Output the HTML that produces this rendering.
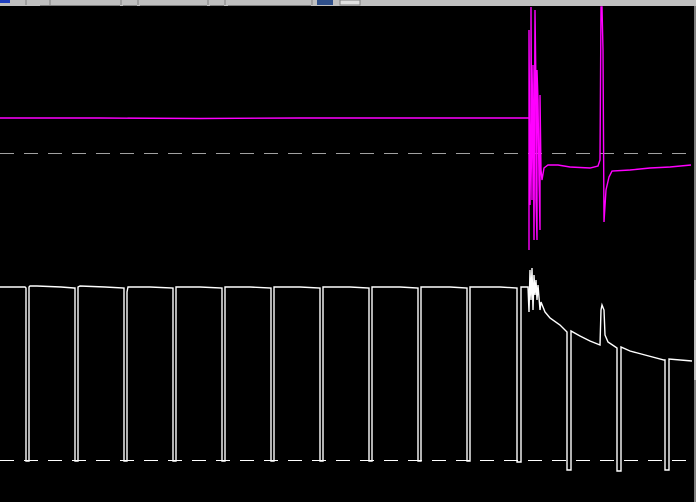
<!DOCTYPE html>
<html><head><meta charset="utf-8"><style>
html,body{margin:0;padding:0;background:#000;width:696px;height:502px;overflow:hidden}
svg{display:block}
</style></head><body>
<svg width="696" height="502" viewBox="0 0 696 502" xmlns="http://www.w3.org/2000/svg">
<rect width="696" height="502" fill="#000"/>
<rect x="0" y="0" width="696" height="6" fill="#c0c0c0"/>
<rect x="0" y="0" width="10" height="3" fill="#2040c0"/>
<g fill="none" stroke="#808080" stroke-width="1">
<line x1="26" y1="0" x2="26" y2="5"/><line x1="50" y1="0" x2="50" y2="5"/>
<line x1="40" y1="5.5" x2="120" y2="5.5"/><line x1="121" y1="0" x2="121" y2="5"/>
<line x1="123" y1="5.5" x2="137" y2="5.5"/><line x1="138" y1="0" x2="138" y2="5"/>
<line x1="140" y1="5.5" x2="207" y2="5.5"/><line x1="208" y1="0" x2="208" y2="5"/>
<line x1="210" y1="5.5" x2="224" y2="5.5"/><line x1="225" y1="0" x2="225" y2="5"/>
<line x1="228" y1="5.5" x2="311" y2="5.5"/><line x1="312" y1="0" x2="312" y2="5"/>
</g>
<rect x="317" y="0" width="16" height="5" fill="#30508a"/>
<rect x="340" y="0" width="20" height="5" fill="#e0e0e0" stroke="#808080"/>
<rect x="694" y="6" width="2" height="496" fill="#808080"/>
<rect x="694" y="280" width="2" height="100" fill="#c0c0c0"/>
<line x1="0" y1="153.5" x2="692" y2="153.5" stroke="#a0a0a0" stroke-width="1" stroke-dasharray="14 10"/>
<line x1="0" y1="460.5" x2="692" y2="460.5" stroke="#fff" stroke-width="1" stroke-dasharray="14 10"/>
<polyline fill="none" stroke="#ff00ff" stroke-width="1.4" points="0,118 100,118 200,118.5 300,118 400,118 528,118 529,118 529,250 529,30 530,205 531,120 531,7 532,200 532,170 533,65 534,240 535,10 536,90 536,200 537,240 537,70 538,100 539,180 540,230 540,95 541,170 542,180 544,168 548,165 558,165 570,167 590,168 598,166 600,160 601,7 602,7 603,50 604,222 606,190 609,177 612,171 630,170 650,168 670,167 691,165"/>
<polyline fill="none" stroke="#fff" stroke-width="1.4" points="0,287 25,287 26,288 26,461 29,461 29,287 30,286 37,286 61,287 74,288 75,288 75,461 78,461 78,287 80,286 105,287 124,288 124,461 127,461 127,292 128,287 150,287 173,288 173,461 176,461 176,287 200,287 222,288 222,461 225,461 225,287 250,287 271,288 271,461 274,461 274,287 300,287 320,288 320,461 323,461 323,287 350,287 369,288 369,461 372,461 372,287 400,287 418,288 418,461 421,461 421,287 450,287 467,288 467,461 470,461 470,287 500,287 517,288 517,462 521,462 521,287 528,287 529,312 530,270 531,300 532,268 533,310 534,275 535,295 536,280 537,300 538,285 540,310 541,302 545,312 550,318 560,325 566,331 567,332 567,470 571,470 571,331 580,336 590,341 600,345 601,310 602,305 604,310 605,335 608,342 614,346 617,348 617,471 621,471 621,347 630,351 645,355 664,360 665,360 665,470 669,470 669,359 692,361"/>
</svg>
</body></html>
